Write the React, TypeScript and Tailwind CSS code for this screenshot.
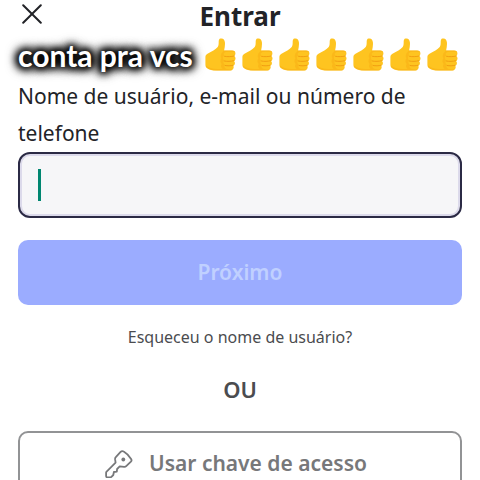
import React from "react";

function CloseIcon() {
  return (
    <svg viewBox="0 0 20 20" className="size-5" fill="none" stroke="#222327" strokeWidth="2" strokeLinecap="round" aria-hidden="true">
      <path d="M1.2 1.2 18.8 18.8M18.8 1.2 1.2 18.8" />
    </svg>
  );
}

function ThumbsUp() {
  return (
    <svg viewBox="0 0 31 33" className="h-[33px] w-[31px]" aria-hidden="true">
      <path
        d="M15.4.6c2.6-.7 4.200 1 4.500 3.600.3 2.900-.2 5.600-.8 8.300h8.100c2.200 0 3.300 1.300 3.200 3 0 1.200-.5 2-1.200 2.500.9.600 1.400 1.500 1.300 2.600 0 1.200-.6 2.100-1.400 2.600.6.600.9 1.300.8 2.200-.1 1.200-.8 2-1.700 2.400.4.500.6 1.100.4 2-.3 1.900-1.800 2.800-3.800 2.800H11.500c-4.200 0-7.300-1-9.700-2.700C.7 29 .4 28.200.4 26.500v-7.300c0-1.700.6-2.700 2.100-3.500 4.400-2.400 8.100-4.200 10.200-6.700 1.100-1.400.9-3.300 1-5.700.1-1.500.6-2.400 1.700-2.700Z"
        fill="#fec420"
      />
      <path
        d="M1 27.500c2.800 2.300 6 3.400 10.500 3.400h6c-1.600-1.200-2-3.300-.8-4.900-1.500-1.500-1.700-3.900-.3-5.400-1-2.200-.8-5.200 1.500-7.200l1.200-.9h8.100c1.600 0 2.700.7 3.100 1.800-1.400-.6-3.300-.6-5.400-.5l-4.200.3c-1.900.2-2.600 1.900-1.600 3.300-1.600 1.400-1.500 3.700-.1 4.800-1.200 1.600-.8 3.600.6 4.400-.8 1.900.1 3.800 2 4.300l3.200.5 3 .1c-.8.700-1.900 1-3.200 1H11.500c-4.200 0-7.300-1-9.700-2.700-.5-.6-.8-1.200-.8-2.300Z"
        fill="#f9b016"
        opacity=".6"
      />
      <path
        d="M19.500 18.300c3 .6 6.500.5 9.700-.3M19.300 23c3 .6 6.500.5 9.500-.3M20.100 27.500c2.700.5 5.300.4 7.800-.2"
        fill="none"
        stroke="#ef9a10"
        strokeWidth="0.900"
        strokeLinecap="round"
      />
    </svg>
  );
}

function KeyIcon() {
  return (
    <svg viewBox="0 0 28 28" className="size-7" fill="none" stroke="#77787a" strokeWidth="1.800" strokeLinejoin="round" aria-hidden="true">
      <path d="M15.600 1.900c.9-.9 2-1 3.100-.3 3 1.800 5.300 4.200 7.400 7.300.7 1 .6 1.900-.2 2.800l-4.700 4.500c-.6.600-1.300.8-2.100.7l-4.400-.5-2.600 2.600-.3 2.600-2.900.4-.6 3-1.900 1.900c-.3.300-.6.400-1 .4H2.300c-.7 0-1.200-.5-1.200-1.200v-3.300c0-.5.200-.9.500-1.200l9-9-.5-3.200c-.1-.9.100-1.600.7-2.200Z" />
      <circle cx="18.300" cy="9.500" r="1.900" fill="#77787a" stroke="none" />
    </svg>
  );
}

export default function App() {
  return (
    <main className="bg-white px-[18px] font-['Noto_Sans',sans-serif] text-[#222327]">
      <header className="grid h-9 grid-cols-[28px_1fr_28px] items-start">
        <button type="button" aria-label="Fechar" className="flex h-7 items-center justify-center">
          <CloseIcon />
        </button>
        <h1 className="text-center text-[26px] leading-8 font-bold">Entrar</h1>
      </header>

      <div className="flex h-9 items-center gap-3">
        <p className="pt-[2px] font-['Lato',sans-serif] text-[30px] leading-9 font-bold whitespace-nowrap text-white [text-shadow:0_0_6px_#000,0_0_9px_#000,0_0_10px_#000,0_0_10px_#000,0_0_12px_#000,0_0_14px_#000]">
          conta pra vcs
        </p>
        <div role="img" aria-label="Sete polegares para cima" className="flex gap-[6px]">
          {Array.from({ length: 7 }, (_, i) => (
            <ThumbsUp key={i} />
          ))}
        </div>
      </div>

      <form onSubmit={(e) => e.preventDefault()}>
        <label htmlFor="usuario" className="relative block pt-[6px] text-[21px] leading-[37px]">
          Nome de usuário, e-mail ou número de telefone
        </label>
        <div className="relative">
          <input
            id="usuario"
            type="text"
            className="block h-[66px] w-full rounded-xl border-2 border-[#2b2a45] bg-[#f6f6f8] px-5 text-[21px] caret-[#008577] shadow-[inset_0_0_0_2px_#dcdaeb] outline-none"
          />
          <span className="pointer-events-none absolute top-[17px] left-5 h-8 w-[3px] bg-[#008670]" />
        </div>
        <button type="submit" className="mt-[22px] h-[65px] w-full rounded-[10px] bg-[#9bacff] text-[21px] font-semibold text-[#c0d0ff]">
          Próximo
        </button>
      </form>

      <div className="mt-5 text-center">
        <a href="#recuperar" className="text-[16px] leading-6 text-[#4b4c4f]">
          Esqueceu o nome de usuário?
        </a>
      </div>
      <p className="mt-6 text-center text-[22px] leading-8 font-semibold text-[#4b4c4f]">OU</p>
      <button type="button" className="mt-[26px] flex h-[66px] w-full items-center justify-center gap-4 rounded-[10px] border-2 border-[#929395] pr-2 text-[21px] font-semibold text-[#77787a]">
        <KeyIcon />
        Usar chave de acesso
      </button>
    </main>
  );
}
